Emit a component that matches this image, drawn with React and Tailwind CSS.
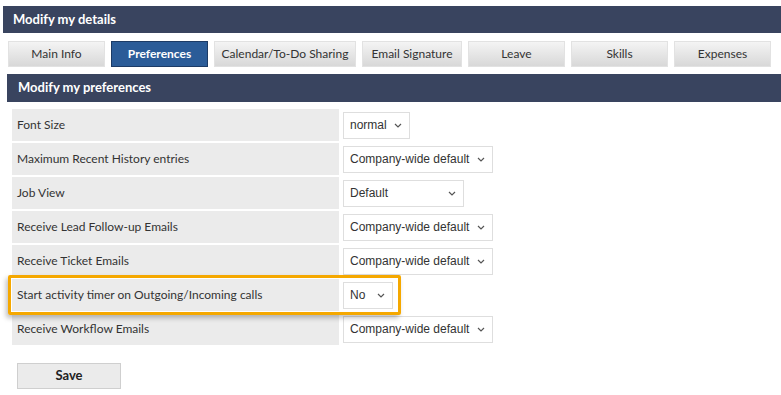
import React from "react";

const tabs = [
  { label: "Main Info", w: "w-[97px]" },
  { label: "Preferences", w: "w-[97px]", active: true },
  { label: "Calendar/To-Do Sharing", w: "w-[142px]" },
  { label: "Email Signature", w: "w-[100px]" },
  { label: "Leave", w: "w-[97px]" },
  { label: "Skills", w: "w-[97px]" },
  { label: "Expenses", w: "w-[97px]" },
];

const rows = [
  { label: "Font Size", value: "normal", w: "w-[67px]" },
  { label: "Maximum Recent History entries", value: "Company-wide default", w: "w-[150px]" },
  { label: "Job View", value: "Default", w: "w-[121px]" },
  { label: "Receive Lead Follow-up Emails", value: "Company-wide default", w: "w-[150px]" },
  { label: "Receive Ticket Emails", value: "Company-wide default", w: "w-[150px]" },
  { label: "Start activity timer on Outgoing/Incoming calls", value: "No", w: "w-[50px]", hl: true },
  { label: "Receive Workflow Emails", value: "Company-wide default", w: "w-[150px]" },
];

function Chevron() {
  return (
    <svg width="8" height="5" viewBox="0 0 8 5" className="shrink-0">
      <path d="M1 1 L4 4 L7 1" fill="none" stroke="#555" strokeWidth="1.2" />
    </svg>
  );
}

export default function App() {
  return (
    <div className="min-h-[395px] bg-white pl-[3px] pt-[6px] font-['Lato',sans-serif] text-[#333]">
      <div className="h-[27px] bg-[#39445f] pl-[10px] flex items-center text-white font-bold text-[13px]">
        Modify my details
      </div>
      <div className="flex gap-[6px] pl-[5px] mt-[8px]">
        {tabs.map((t) => (
          <div
            key={t.label}
            className={
              t.active
                ? `${t.w} h-[26px] flex items-center justify-center bg-[#2b5c98] border border-[#1c3b66] text-white font-bold text-[12px]`
                : `${t.w} h-[26px] flex items-center justify-center bg-gradient-to-b from-[#f4f4f4] to-[#d8d8d8] border border-[#e2e2e2] text-[#333] text-[12px]`
            }
          >
            {t.label}
          </div>
        ))}
      </div>
      <div className="ml-[4px] mt-[7px] h-[28px] bg-[#39445f] pl-[11px] flex items-center text-white font-bold text-[13px]">
        Modify my preferences
      </div>
      <div className="relative ml-[9px] mt-[7px] grid grid-cols-[327px_auto] gap-[2px] w-max">
        {rows.map((r) => (
          <React.Fragment key={r.label}>
            <div className="h-[32px] bg-[#ebebeb] pl-[5px] flex items-center text-[12px]">{r.label}</div>
            <div className="h-[32px] flex items-center pl-[2px] pr-[2px]">
              <div
                className={`${r.w} h-[27px] border border-[#dedede] bg-white flex items-center justify-between pl-[6px] pr-[7px] font-['Liberation_Sans',Arial,sans-serif] text-[12px] text-[#333] whitespace-nowrap`}
              >
                <span>{r.value}</span>
                <Chevron />
              </div>
            </div>
          </React.Fragment>
        ))}
        <div className="absolute left-[-4px] top-[166px] w-[393px] h-[40px] border-[3px] border-[#f5a800] rounded-[2px] shadow-[-2px_3px_5px_rgba(0,0,0,0.25)] pointer-events-none" />
      </div>
      <div className="ml-[14px] mt-[18px] w-[104px] h-[26px] bg-[#ebebeb] border border-[#cfcfcf] flex items-center justify-center font-bold text-[13px] text-[#222]">
        Save
      </div>
    </div>
  );
}
